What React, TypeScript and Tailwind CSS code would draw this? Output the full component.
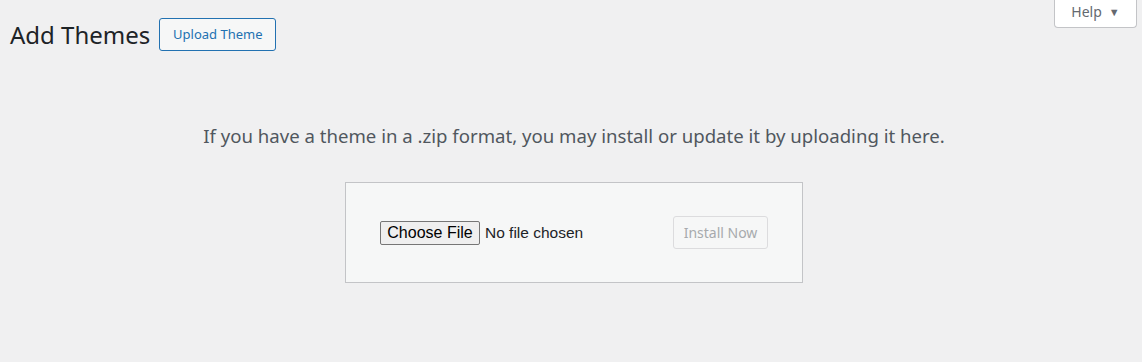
import React from 'react';

const sans = { fontFamily: '"Segoe UI", "Noto Sans", sans-serif' };

function HelpTab() {
  return (
    <div className="absolute right-[5px] top-0">
      <button className="flex h-[28px] w-[83px] items-start justify-center gap-[7px] rounded-b-[4px] border border-t-0 border-[#c3c4c7] bg-white pt-[3px] text-[14px] leading-[18px] text-[#646970]">
        <span>Help</span>
        <span className="text-[11px] leading-[18px]">▼</span>
      </button>
    </div>
  );
}

function UploadForm() {
  return (
    <div className="flex w-[458px] items-center justify-between border border-[#c3c4c7] bg-[#f6f7f7] px-[34px] py-[33px]">
      <div className="flex items-center gap-[5px]" style={{ fontFamily: '"Liberation Sans", Arial, sans-serif' }}>
        <button className="h-[24px] w-[100px] rounded-[2px] border border-[#767676] bg-[#efefef] text-[16px] leading-none text-black">
          Choose File
        </button>
        <span className="text-[15.5px] text-[#1d2327]">No file chosen</span>
      </div>
      <button
        disabled
        className="h-[33px] w-[95px] rounded-[3px] border border-[#dcdcde] bg-[#f6f7f7] text-[14px] text-[#a7aaad]"
      >
        Install Now
      </button>
    </div>
  );
}

export default function App() {
  return (
    <div className="relative min-h-[362px] bg-[#f0f0f1]" style={sans}>
      <HelpTab />
      <div className="flex items-center gap-[9px] pl-[10px] pt-[18px]">
        <h1 className="text-[24px] font-normal leading-[32px] text-[#1d2327]">Add Themes</h1>
        <button className="h-[33px] w-[117px] rounded-[3px] border border-[#2271b1] bg-[#f6f7f7] text-[13px] text-[#2271b1]">
          Upload Theme
        </button>
      </div>
      <div className="pl-[6px]">
        <p className="mt-[68px] text-center text-[18.6px] leading-[34px] text-[#50575e]">
          If you have a theme in a .zip format, you may install or update it by uploading it here.
        </p>
        <div className="mt-[29px] flex justify-center">
          <UploadForm />
        </div>
      </div>
    </div>
  );
}
